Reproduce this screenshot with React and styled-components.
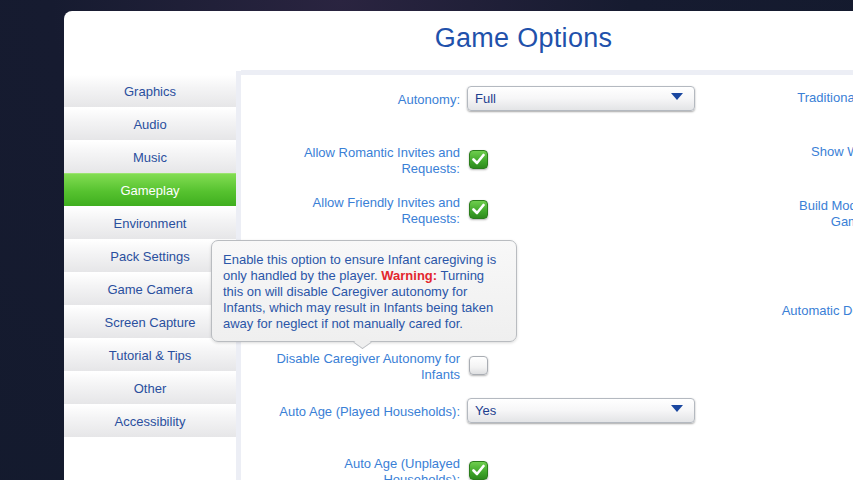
import React from "react";
import styled, { createGlobalStyle } from "styled-components";

const GlobalStyle = createGlobalStyle`
  html, body {
    margin: 0;
    padding: 0;
    width: 853px;
    height: 480px;
    overflow: hidden;
    background: #141a2e;
    font-family: "Liberation Sans", Arial, sans-serif;
  }
`;

const Screen = styled.div`
  width: 853px;
  height: 480px;
  padding: 11px 0 0 64px;
  box-sizing: border-box;
  background: radial-gradient(ellipse at 40% 0%, #2a2440 0%, #161b30 40%, #131a2d 100%);
  overflow: hidden;
`;

const Panel = styled.div`
  width: 789px;
  height: 469px;
  background: #ffffff;
  border-top-left-radius: 8px;
  display: flex;
  flex-direction: column;
  overflow: hidden;
`;

const Header = styled.div`
  height: 60px;
  flex-shrink: 0;
  display: flex;
  align-items: center;
  justify-content: center;
  padding: 0 0 5px 130px;
  box-sizing: border-box;
  font-size: 27px;
  color: #1f51ab;
  letter-spacing: 0.3px;
`;

const Body = styled.div`
  flex: 1;
  min-height: 0;
  display: flex;
  position: relative;
`;

const Sidebar = styled.div`
  width: 172px;
  padding-top: 3px;
  display: flex;
  flex-direction: column;
  flex-shrink: 0;
`;

const Tab = styled.div`
  height: 33px;
  flex-shrink: 0;
  display: flex;
  align-items: center;
  justify-content: center;
  font-size: 13px;
  color: ${(p) => (p.$active ? "#ffffff" : "#2a4f9e")};
  background: ${(p) =>
    p.$active
      ? "linear-gradient(#82dc52, #56c22f 55%, #3fae1f)"
      : "linear-gradient(#ffffff, #f4f4f5 40%, #e6e6e8)"};
  border-top: 1px solid ${(p) => (p.$active ? "#9be46f" : "#ffffff")};
  box-sizing: border-box;
`;

const Divider = styled.div`
  width: 5px;
  background: #eceef5;
  flex-shrink: 0;
`;

const Content = styled.div`
  flex: 1;
  border-top: 5px solid #eceef5;
  margin-top: -1px;
  display: flex;
  overflow: hidden;
`;

const Column = styled.div`
  display: flex;
  flex-direction: column;
  padding-left: ${(p) => p.$pl}px;
  flex-shrink: 0;
`;

const Row = styled.div`
  height: 36px;
  flex-shrink: 0;
  margin-top: ${(p) => p.$mt}px;
  display: flex;
  align-items: center;
  gap: 7px;
`;

const Label = styled.div`
  width: ${(p) => p.$w || 190}px;
  flex-shrink: 0;
  text-align: right;
  font-size: 13px;
  line-height: 16px;
  color: #3a80d6;
`;

const Dropdown = styled.div`
  width: 228px;
  height: 25px;
  margin-top: -3px;
  border: 1px solid #b4b9c0;
  border-radius: 4px;
  background: linear-gradient(#ffffff, #f6f6f7 50%, #e3e4e6);
  box-shadow: 0 1px 2px rgba(0, 0, 0, 0.35);
  display: flex;
  align-items: center;
  justify-content: space-between;
  padding: 0 11px 0 7px;
  box-sizing: border-box;
  font-size: 13px;
  color: #1d3f8f;
`;

const Arrow = styled.span`
  width: 0;
  height: 0;
  border-left: 6.5px solid transparent;
  border-right: 6.5px solid transparent;
  border-top: 7px solid #1a47a0;
  margin-top: -4px;
`;

const Check = styled.div`
  width: 19px;
  height: 19px;
  margin: -4px 0 0 2px;
  border-radius: 4px;
  box-sizing: border-box;
  display: flex;
  align-items: center;
  justify-content: center;
  flex-shrink: 0;
  background: ${(p) =>
    p.$on
      ? "linear-gradient(#6fce4e, #3fa62a 60%, #2d8a1d)"
      : "linear-gradient(#ffffff, #f3f3f3 60%, #dedfe1)"};
  border: 1px solid ${(p) => (p.$on ? "#2b7d1c" : "#a9adb3")};
  box-shadow: 0 1px 2px rgba(0, 0, 0, 0.3);
`;

const Tooltip = styled.div`
  position: absolute;
  left: 147px;
  top: 169px;
  width: 306px;
  height: 102px;
  box-sizing: border-box;
  padding: 11px 10px 0 11px;
  background: linear-gradient(#f8f8f8, #efefef);
  border: 1px solid #b9bcc0;
  border-radius: 7px;
  box-shadow: 0 1px 3px rgba(0, 0, 0, 0.15);
  font-size: 13px;
  line-height: 16px;
  color: #2b56a8;
  z-index: 2;

  &::after {
    content: "";
    position: absolute;
    left: 144px;
    bottom: -8px;
    width: 12px;
    height: 12px;
    background: #efefef;
    border-right: 1px solid #b9bcc0;
    border-bottom: 1px solid #b9bcc0;
    transform: scaleY(0.7) rotate(45deg);
  }
`;

const Warn = styled.span`
  color: #e3262d;
  font-weight: bold;
`;

const CheckMark = () => (
  <svg width="13" height="12" viewBox="0 0 13 12">
    <path
      d="M1.5 6.5 L5 10 L11.5 2"
      fill="none"
      stroke="#ffffff"
      strokeWidth="2.6"
      strokeLinecap="round"
      strokeLinejoin="round"
    />
  </svg>
);

const tabs = [
  "Graphics",
  "Audio",
  "Music",
  "Gameplay",
  "Environment",
  "Pack Settings",
  "Game Camera",
  "Screen Capture",
  "Tutorial & Tips",
  "Other",
  "Accessibility",
];

const Toggle = ({ on }) => <Check $on={on}>{on && <CheckMark />}</Check>;

export default function App() {
  return (
    <>
      <GlobalStyle />
      <Screen>
        <Panel>
          <Header>Game Options</Header>
          <Body>
            <Sidebar>
              {tabs.map((t) => (
                <Tab key={t} $active={t === "Gameplay"}>
                  {t}
                </Tab>
              ))}
            </Sidebar>
            <Divider />
            <Content>
              <Column $pl={29}>
                <Row $mt={7}>
                  <Label>Autonomy:</Label>
                  <Dropdown>
                    Full
                    <Arrow />
                  </Dropdown>
                </Row>
                <Row $mt={25}>
                  <Label>Allow Romantic Invites and Requests:</Label>
                  <Toggle on />
                </Row>
                <Row $mt={14}>
                  <Label>Allow Friendly Invites and Requests:</Label>
                  <Toggle on />
                </Row>
                <Row $mt={14}>
                  <Label>Allow Sim Stories:</Label>
                  <Toggle on />
                </Row>
                <Row $mt={14}>
                  <Label>Infant Caregiving:</Label>
                  <Toggle on />
                </Row>
                <Row $mt={20}>
                  <Label>Disable Caregiver Autonomy for Infants</Label>
                  <Toggle />
                </Row>
                <Row $mt={9}>
                  <Label>Auto Age (Played Households):</Label>
                  <Dropdown>
                    Yes
                    <Arrow />
                  </Dropdown>
                </Row>
                <Row $mt={24}>
                  <Label>Auto Age (Unplayed Households):</Label>
                  <Toggle on />
                </Row>
              </Column>
              <Column $pl={86}>
                <Row $mt={5}>
                  <Label $w={130}>Traditional Camera:</Label>
                  <Toggle />
                </Row>
                <Row $mt={18}>
                  <Label $w={130}>Show Wants Bar:</Label>
                  <Toggle on />
                </Row>
                <Row $mt={26}>
                  <Label $w={130}>Build Mode Pauses Game Speed:</Label>
                  <Toggle />
                </Row>
                <Row $mt={61}>
                  <Label $w={130}>Automatic Downloads:</Label>
                  <Toggle on />
                </Row>
              </Column>
            </Content>
            <Tooltip>
              Enable this option to ensure Infant caregiving is only handled by
              the player. <Warn>Warning:</Warn> Turning this on will disable
              Caregiver autonomy for Infants, which may result in Infants being
              taken away for neglect if not manually cared for.
            </Tooltip>
          </Body>
        </Panel>
      </Screen>
    </>
  );
}
